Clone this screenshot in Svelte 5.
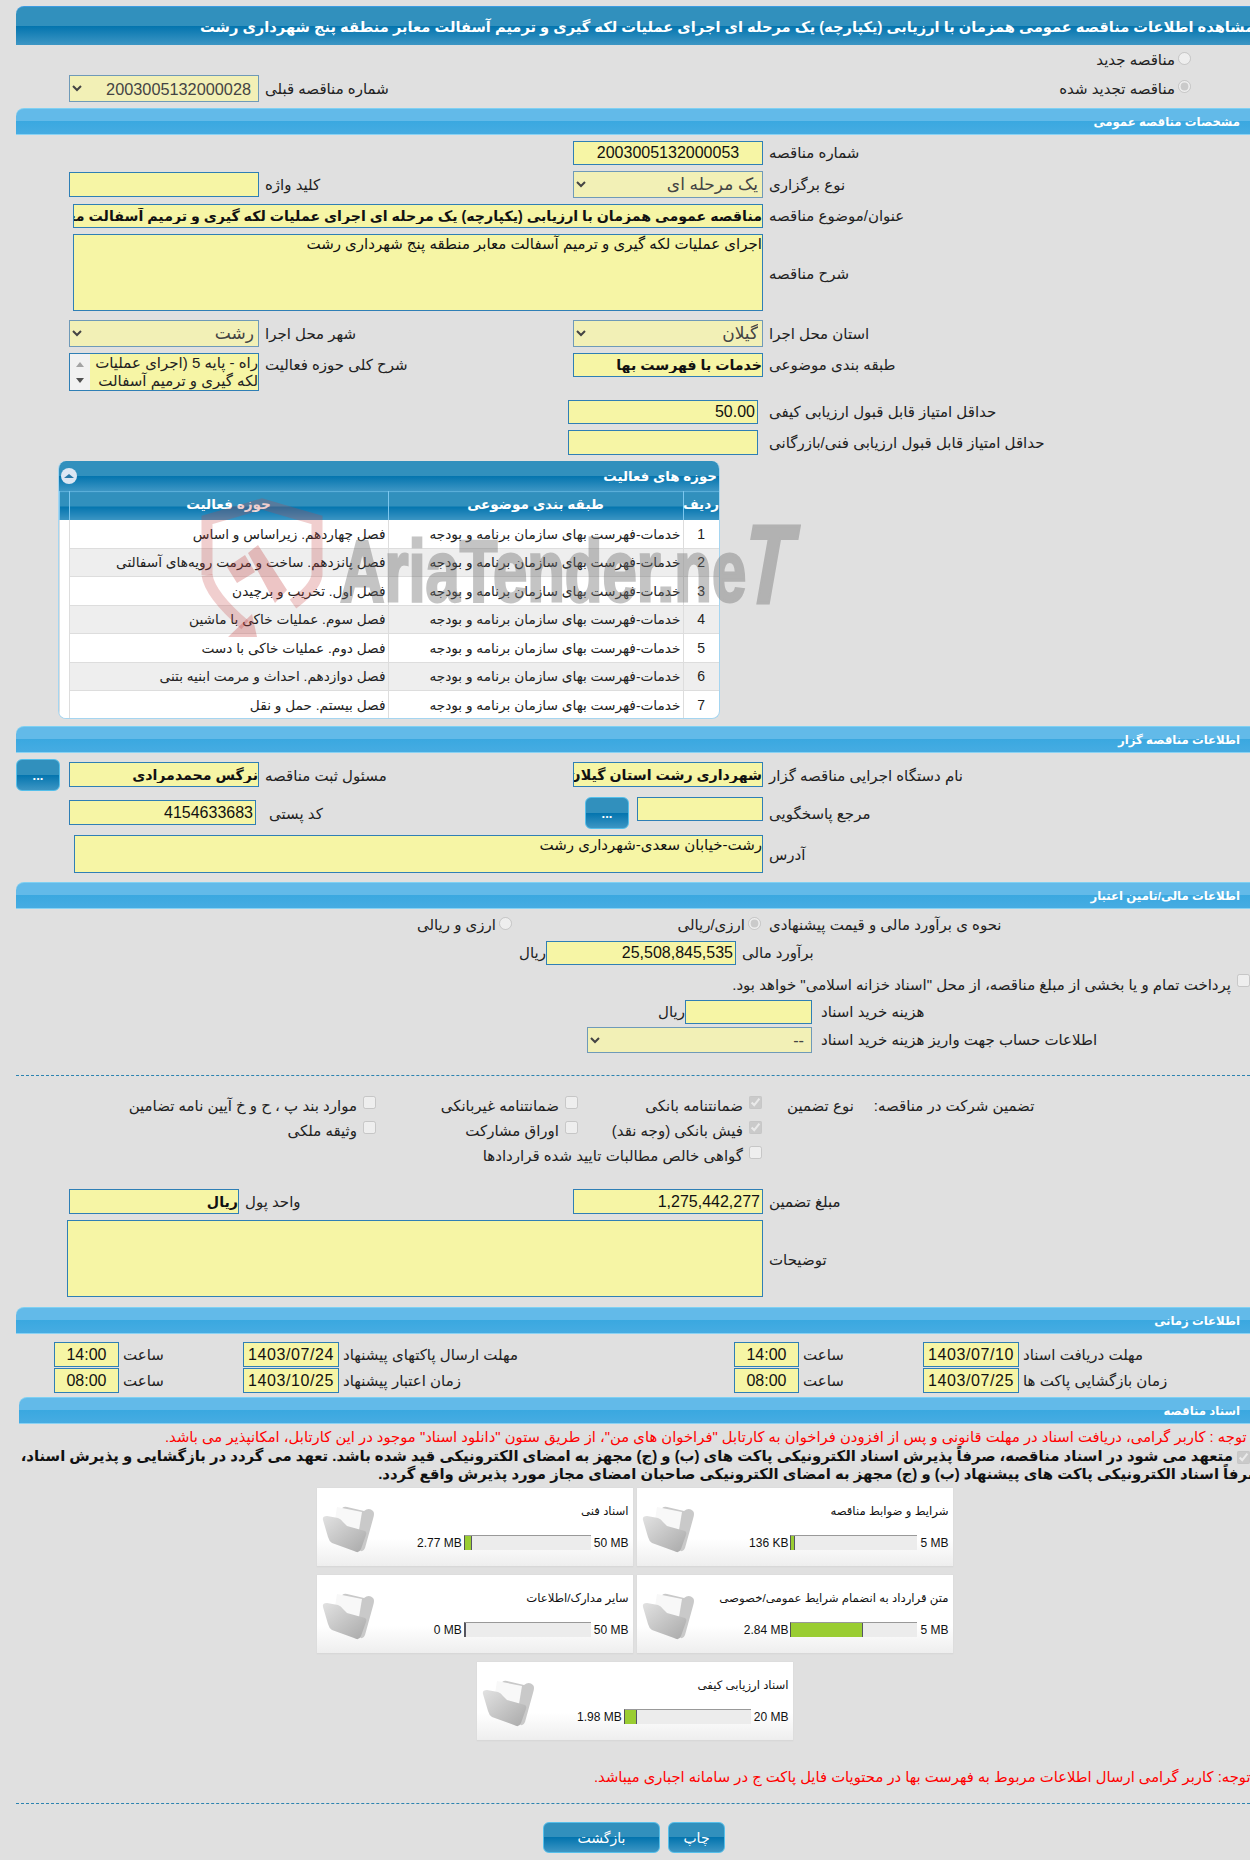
<script lang="ts">
  const TITLE =
    'مناقصه عمومی همزمان با ارزیابی (یکپارچه) یک مرحله ای اجرای عملیات لکه گیری و ترمیم آسفالت معابر منطقه پنج شهرداری رشت';
  const DESC = 'اجرای عملیات لکه گیری و ترمیم آسفالت معابر منطقه پنج شهرداری رشت';
  const PRICE_LIST = 'خدمات-فهرست بهای سازمان برنامه و بودجه';

  const activities = [
    'فصل چهاردهم. زیراساس و اساس',
    'فصل پانزدهم. ساخت و مرمت رویه‌های آسفالتی',
    'فصل اول. تخریب و برچیدن',
    'فصل سوم. عملیات خاکی با ماشین',
    'فصل دوم. عملیات خاکی با دست',
    'فصل دوازدهم. احداث و مرمت ابنیه بتنی',
    'فصل بیستم. حمل و نقل'
  ];

  const files = [
    { name: 'شرایط و ضوابط مناقصه', used: '136 KB', max: '5 MB', pct: 2.6 },
    { name: 'اسناد فنی', used: '2.77 MB', max: '50 MB', pct: 5.5 },
    { name: 'متن قرارداد به انضمام شرایط عمومی/خصوصی', used: '2.84 MB', max: '5 MB', pct: 56.8 },
    { name: 'سایر مدارک/اطلاعات', used: '0 MB', max: '50 MB', pct: 0 },
    { name: 'اسناد ارزیابی کیفی', used: '1.98 MB', max: '20 MB', pct: 9.9 }
  ];
</script>

{#snippet folder()}
  <svg class="folder" viewBox="0 0 54 50" aria-hidden="true">
    <defs>
      <linearGradient id="fold" x1="0" y1="0" x2="1" y2="1">
        <stop offset="0" stop-color="#e2e2e2" />
        <stop offset="1" stop-color="#a9a9a9" />
      </linearGradient>
    </defs>
    <path d="M20 7 Q21 2 26 3 L43 7 Q48 3 52 7 Q54 9 52 15 L44 44 Q42 49 38 46 Z" fill="#c9c9c9" />
    <path d="M16 3 L41 8 L37 32 L13 22 Z" fill="#f8f8f8" />
    <path d="M2 16 Q1 12 6 12 L17 14 Q20 15 22 18 L26 22 L44 27 Q46 28 45 31 L40 45 Q38 50 33 47 L11 39 Q8 37 7 33 Z" fill="url(#fold)" />
  </svg>
{/snippet}

<div class="page">
  <div class="title-bar"><span>مشاهده اطلاعات {TITLE}</span></div>

  <div class="row radio-top">
    <div></div><div></div><div></div>
    <label class="radio-label"><input type="radio" disabled />مناقصه جدید</label>
  </div>
  <div class="row radio-second">
    <select disabled dir="rtl"><option>2003005132000028</option></select>
    <span class="lbl">شماره مناقصه قبلی</span>
    <div></div>
    <label class="radio-label"><input type="radio" checked disabled />مناقصه تجدید شده</label>
  </div>

  <div class="bar first">مشخصات مناقصه عمومی</div>

  <div class="row r24 gap6">
    <div></div><div></div>
    <input class="field center" dir="ltr" readonly value="2003005132000053" />
    <span class="lbl">شماره مناقصه</span>
  </div>
  <div class="row r27 gap6">
    <input class="field slim" dir="rtl" readonly />
    <span class="lbl">کلید واژه</span>
    <select class="ar" disabled dir="rtl"><option>یک مرحله ای</option></select>
    <span class="lbl">نوع برگزاری</span>
  </div>
  <div class="row r24 gap6">
    <input class="field wide bold" dir="rtl" readonly value={TITLE} />
    <span class="lbl">عنوان/موضوع مناقصه</span>
  </div>
  <div class="row r77 gap6">
    <textarea class="field wide small" dir="rtl" readonly>{DESC}</textarea>
    <span class="lbl">شرح مناقصه</span>
  </div>
  <div class="row r27 gap9">
    <select class="ar" disabled dir="rtl"><option>رشت</option></select>
    <span class="lbl">شهر محل اجرا</span>
    <select class="ar" disabled dir="rtl"><option>گیلان</option></select>
    <span class="lbl">استان محل اجرا</span>
  </div>
  <div class="row r38 gap6">
    <div class="listbox">
      <div class="scroller"><i class="up"></i><i class="down"></i></div>
      <div class="list-text">راه - پایه 5 (اجرای عملیات لکه گیری و ترمیم آسفالت</div>
    </div>
    <span class="lbl top">شرح کلی حوزه فعالیت</span>
    <input class="field h24 bold" dir="rtl" readonly value="خدمات با فهرست بها" />
    <span class="lbl top">طبقه بندی موضوعی</span>
  </div>
  <div class="row r24 gap9">
    <div></div><div></div>
    <input class="field shift" dir="rtl" readonly value="50.00" />
    <span class="lbl">حداقل امتیاز قابل قبول ارزیابی کیفی</span>
  </div>
  <div class="row r25 gap6">
    <div></div><div></div>
    <input class="field shift" dir="rtl" readonly />
    <span class="lbl">حداقل امتیاز قابل قبول ارزیابی فنی/بازرگانی</span>
  </div>

  <div class="panel-wrap">
    <div class="panel">
      <div class="panel-head">
        <span class="collapse"><i></i></span>
        <span>حوزه های فعالیت</span>
      </div>
      <table dir="rtl">
        <colgroup>
          <col class="c-num" /><col class="c-sub" /><col class="c-act" /><col />
        </colgroup>
        <thead>
          <tr><th>ردیف</th><th>طبقه بندی موضوعی</th><th>حوزه فعالیت</th><th></th></tr>
        </thead>
        <tbody>
          {#each activities as activity, i}
            <tr>
              <td class="num">{i + 1}</td>
              <td>{PRICE_LIST}</td>
              <td>{activity}</td>
              <td></td>
            </tr>
          {/each}
        </tbody>
      </table>
    </div>

    <!-- watermark over the table -->
    <div class="mark">
      <svg class="shield" viewBox="0 0 150 150" aria-hidden="true">
        <path d="M17 85 L17 30 L72 14 L127 30 L127 85 Q125 98 103 114" class="band" />
        <path d="M17 85 Q20 105 55 135" class="band" />
        <path d="M38 147 L67 147 L62 124 Z M37 77 L55 65 L65 82 L47 93 Z M58 63 L68 55 L97 100 L85 113 Z" class="solid" />
      </svg>
      <div class="mark-text">AriaTender.ne<span>T</span></div>
    </div>
  </div>

  <div class="bar gap7">اطلاعات مناقصه گزار</div>

  <div class="row r32 gap6">
    <div class="with-btn-left">
      <button class="btn dots">...</button>
      <input class="field" dir="rtl" readonly value="نرگس محمدمرادی" />
    </div>
    <span class="lbl">مسئول ثبت مناقصه</span>
    <input class="field h25 mt3 bold" dir="rtl" readonly value="شهرداری رشت استان گیلان" />
    <span class="lbl">نام دستگاه اجرایی مناقصه گزار</span>
  </div>
  <div class="row r32 gap6">
    <input class="field h25 mt3 postal" dir="rtl" readonly value="4154633683" />
    <span class="lbl pad-postal">کد پستی</span>
    <div class="with-btn">
      <button class="btn dots">...</button>
      <input class="field h24" dir="rtl" readonly />
    </div>
    <span class="lbl">مرجع پاسخگویی</span>
  </div>
  <div class="row r38 gap6">
    <textarea class="field wide addr small" dir="rtl" readonly>رشت-خیابان سعدی-شهرداری رشت</textarea>
    <span class="lbl low">آدرس</span>
  </div>

  <div class="bar gap9">اطلاعات مالی/تامین اعتبار</div>

  <div class="fin-radios">
    <label class="radio-label"><input type="radio" disabled />ارزی و ریالی</label>
    <label class="radio-label"><input type="radio" checked disabled />ارزی/ریالی</label>
    <span class="lbl">نحوه ی برآورد مالی و قیمت پیشنهادی</span>
  </div>
  <div class="fin-budget">
    <span class="unit">ریال</span>
    <input class="field h24" dir="rtl" readonly value="25,508,845,535" />
    <span class="lbl">برآورد مالی</span>
  </div>
  <label class="treasury">
    <input type="checkbox" disabled />
    پرداخت تمام و یا بخشی از مبلغ مناقصه، از محل "اسناد خزانه اسلامی" خواهد بود.
  </label>
  <div class="fin-cost">
    <span class="unit">ریال</span>
    <input class="field h24" dir="rtl" readonly />
    <span class="lbl">هزینه خرید اسناد</span>
  </div>
  <div class="fin-account">
    <select disabled dir="rtl"><option>--</option></select>
    <span class="lbl">اطلاعات حساب جهت واریز هزینه خرید اسناد</span>
  </div>

  <div class="dashed first-dash"></div>

  <div class="guarantee">
    <label class="chk"><input type="checkbox" disabled />موارد بند پ ، ح و خ آیین نامه تضامین</label>
    <label class="chk"><input type="checkbox" disabled />ضمانتنامه غیربانکی</label>
    <label class="chk"><input type="checkbox" checked disabled />ضمانتنامه بانکی</label>
    <div class="g-labels"><span>نوع تضمین</span><span>تضمین شرکت در مناقصه:</span></div>

    <label class="chk"><input type="checkbox" disabled />وثیقه ملکی</label>
    <label class="chk"><input type="checkbox" disabled />اوراق مشارکت</label>
    <label class="chk"><input type="checkbox" checked disabled />فیش بانکی (وجه نقد)</label>
    <div></div>

    <div></div><div></div>
    <label class="chk"><input type="checkbox" disabled />گواهی خالص مطالبات تایید شده قراردادها</label>
    <div></div>
  </div>

  <div class="row r25 gap21">
    <input class="field unit-field" dir="rtl" readonly value="ریال" />
    <span class="lbl money-lbl">واحد پول</span>
    <input class="field" dir="rtl" readonly value="1,275,442,277" />
    <span class="lbl">مبلغ تضمین</span>
  </div>
  <div class="row r77 gap6">
    <textarea class="field notes-area" dir="rtl" readonly></textarea>
    <span class="lbl">توضیحات</span>
  </div>

  <div class="bar gap10">اطلاعات زمانی</div>

  <div class="times">
    <input class="field center" dir="rtl" readonly value="14:00" />
    <span class="lbl">ساعت</span>
    <input class="field center date" dir="rtl" readonly value="1403/07/24" />
    <span class="lbl">مهلت ارسال پاکتهای پیشنهاد</span>
    <input class="field center" dir="rtl" readonly value="14:00" />
    <span class="lbl">ساعت</span>
    <input class="field center date" dir="rtl" readonly value="1403/07/10" />
    <span class="lbl">مهلت دریافت اسناد</span>

    <input class="field center" dir="rtl" readonly value="08:00" />
    <span class="lbl">ساعت</span>
    <input class="field center date" dir="rtl" readonly value="1403/10/25" />
    <span class="lbl">زمان اعتبار پیشنهاد</span>
    <input class="field center" dir="rtl" readonly value="08:00" />
    <span class="lbl">ساعت</span>
    <input class="field center date" dir="rtl" readonly value="1403/07/25" />
    <span class="lbl">زمان بازگشایی پاکت ها</span>
  </div>

  <div class="bar docs-bar">اسناد مناقصه</div>

  <p class="red red-one"><span>توجه : کاربر گرامی، دریافت اسناد در مهلت قانونی و پس از افزودن فراخوان به کارتابل "فراخوان های من"، از طریق ستون "دانلود اسناد" موجود در این کارتابل، امکانپذیر می باشد.</span></p>

  <div class="pledge" dir="rtl">
    <input type="checkbox" checked disabled />
    متعهد می شود در اسناد مناقصه، صرفاً پذیرش اسناد الکترونیکی پاکت های (ب) و (ج) مجهز به امضای الکترونیکی قید شده باشد. تعهد می گردد در بازگشایی و پذیرش اسناد،<br />
    صرفاً اسناد الکترونیکی پاکت های پیشنهاد (ب) و (ج) مجهز به امضای الکترونیکی صاحبان امضای مجاز مورد پذیرش واقع گردد.
  </div>

  <div class="cards">
    {#each files as file}
      <div class="card">
        {@render folder()}
        <div class="card-body">
          <div class="card-name">{file.name}</div>
          <div class="meter-row">
            <span>{file.used}</span>
            <div class="meter"><div class="fill" style="width:{file.pct}%"></div></div>
            <span>{file.max}</span>
          </div>
        </div>
      </div>
    {/each}
  </div>

  <p class="red red-two"><span>توجه: کاربر گرامی ارسال اطلاعات مربوط به فهرست بها در محتویات فایل پاکت ج در سامانه اجباری میباشد.</span></p>

  <div class="dashed second-dash"></div>

  <div class="actions">
    <button class="btn back">بازگشت</button>
    <button class="btn print">چاپ</button>
  </div>
</div>

<style>
  :global(body) {
    margin: 0;
    background: #e0e0e0;
  }

  .page {
    width: 1250px;
    height: 1860px;
    overflow: hidden;
    background: #e0e0e0;
    padding-top: 6px;
    box-sizing: border-box;
    font-family: "Liberation Sans", "DejaVu Sans", sans-serif;
    font-size: 15px;
    color: #222;
  }

  .title-bar {
    margin-left: 16px;
    height: 39px;
    box-sizing: border-box;
    display: flex;
    align-items: center;
    padding-left: 184px;
    overflow: hidden;
    white-space: nowrap;
    direction: ltr;
    border-radius: 8px 0 0 0;
    border-top: 1px solid #3d9be0;
    color: #fff;
    font-weight: bold;
    font-size: 14.65px;
    background: linear-gradient(#3190bd 0, #3190bd 50%, #0374ae 50%, #3d96c4 100%);
  }

  .title-bar span {
    flex: none;
    direction: rtl;
  }

  .bar {
    margin-left: 16px;
    height: 27px;
    box-sizing: border-box;
    padding: 2px 10px 0 0;
    direction: rtl;
    color: #fff;
    font-weight: bold;
    font-size: 11.7px;
    line-height: 22px;
    border-radius: 8px 0 0 0;
    border-top: 1px solid #7fd0f2;
    border-bottom: 1px solid #8ad2f3;
    background: linear-gradient(#62bae9 0, #62bae9 48%, #3aa8e0 48%, #46ace2 100%);
  }

  .bar.first { margin-top: 6px; }
  .gap7 { margin-top: 7px; }
  .gap9 { margin-top: 9px; }
  .gap10 { margin-top: 10px; }
  .gap6 { margin-top: 6px; }
  .gap21 { margin-top: 21px; }

  .docs-bar {
    margin-left: 19px;
    margin-top: 4px;
  }

  .row {
    display: grid;
    grid-template-columns: 190px 314px 190px 1fr;
    margin-left: 69px;
    align-items: center;
  }

  .r24 { height: 24px; }
  .r25 { height: 25px; }
  .r27 { height: 27px; }
  .r32 { height: 32px; align-items: start; }
  .r38 { height: 38px; align-items: start; }
  .r77 { height: 77px; }

  .radio-top { height: 30px; }
  .radio-second { height: 27px; }

  .lbl {
    direction: rtl;
    text-align: left;
    unicode-bidi: plaintext;
    padding-left: 6px;
    white-space: nowrap;
  }

  .r32 .lbl, .r38 .lbl { padding-top: 8px; }
  .r38 .lbl.top { padding-top: 3px; }
  .r38 .lbl.low { padding-top: 11px; }
  .r77 .lbl { padding-top: 3px; }

  .field {
    box-sizing: border-box;
    width: 100%;
    height: 100%;
    margin: 0;
    padding: 0 2px;
    border: 1px solid #2f7fb5;
    background: #f6f5a5;
    color: #111;
    font: 16px "Liberation Sans", "DejaVu Sans", sans-serif;
    border-radius: 0;
    outline: none;
  }

  .center { text-align: center; }
  .date { letter-spacing: 0.6px; }
  .bold { font-weight: bold; font-size: 14.2px; padding: 0; }
  .small { font-size: 15px; padding: 0; }
  .slim { height: 25px; }
  .h24 { height: 24px; }
  .h25 { height: 25px; }
  .mt3 { margin-top: 3px; }
  .shift { margin-left: -5px; }

  .wide {
    grid-column: 1 / 4;
    width: calc(100% - 4px);
    margin-left: 4px;
  }

  textarea.field { resize: none; overflow: hidden; }

  .addr { margin-left: 5px; width: calc(100% - 5px); }
  .postal { width: 187px; }
  .pad-postal { padding-left: 10px; }

  select {
    box-sizing: border-box;
    width: 100%;
    height: 100%;
    margin: 0;
    padding-right: 3px;
    border: 1px solid #6f9ab8;
    border-radius: 0;
    background-color: #f2f0b6;
    color: #444;
    opacity: 1;
    font: 16.3px "Liberation Sans", "DejaVu Sans", sans-serif;
  }

  select.ar { font-size: 17px; padding-right: 0; }

  .radio-label {
    display: flex;
    align-items: center;
    direction: rtl;
    padding-right: 59px;
    white-space: nowrap;
  }

  .radio-label input {
    margin: 0 0 4px 3px;
  }

  .listbox {
    display: flex;
    box-sizing: border-box;
    height: 38px;
    border: 1px solid #2f7fb5;
    background: #f6f5a5;
    overflow: hidden;
  }

  .scroller {
    flex: none;
    width: 20px;
    background: #f1f1f1;
    display: flex;
    flex-direction: column;
    align-items: center;
    justify-content: center;
    gap: 11px;
  }

  .scroller i {
    width: 0;
    height: 0;
    border-left: 4px solid transparent;
    border-right: 4px solid transparent;
  }

  .scroller .up { border-bottom: 5px solid #a3a3a3; }
  .scroller .down { border-top: 5px solid #505050; }

  .list-text {
    direction: rtl;
    font-size: 15px;
    line-height: 18px;
    white-space: normal;
  }

  .panel-wrap {
    position: relative;
    margin: 6px 0 0 58px;
    width: 662px;
  }

  .panel {
    height: 258px;
    box-sizing: border-box;
    background: #fff;
    overflow: hidden;
    border-radius: 8px;
    border: 1px solid #a5d5f0;
    border-top: 0;
  }

  .panel-head {
    height: 30px;
    display: flex;
    align-items: center;
    justify-content: space-between;
    padding: 0 2px 0 2px;
    color: #fff;
    font-weight: bold;
    font-size: 13.4px;
    direction: ltr;
    background: linear-gradient(#3190bd 0, #3190bd 50%, #0374ae 50%, #3d96c4 100%);
  }

  .collapse {
    width: 16px;
    height: 16px;
    border-radius: 50%;
    background: #dde7f3;
    display: flex;
    align-items: center;
    justify-content: center;
  }

  .collapse i {
    width: 0;
    height: 0;
    border-left: 5px solid transparent;
    border-right: 5px solid transparent;
    border-bottom: 4px solid #2b79a9;
  }

  table {
    width: 100%;
    table-layout: fixed;
    border-collapse: collapse;
    font-size: 13.7px;
  }

  .c-num { width: 36px; }
  .c-sub { width: 295px; }
  .c-act { width: 319px; }

  th {
    height: 28px;
    padding: 0 0 4px;
    box-sizing: border-box;
    color: #fff;
    font-size: 13.6px;
    border-left: 1px solid #7cc6ee;
    border-top: 1px solid #5aaed8;
    background: linear-gradient(#3190bd 0, #3190bd 50%, #0374ae 50%, #3d96c4 100%);
  }

  td {
    height: 28.5px;
    padding: 0 2px;
    box-sizing: border-box;
    border-bottom: 1px solid #ddd;
    border-left: 1px solid #ddd;
    white-space: nowrap;
    text-align: right;
    color: #222;
  }

  td.num {
    text-align: center;
    font-size: 14px;
  }

  tbody tr:nth-child(even) td { background: #eee; }
  tbody tr td:last-child { background: #fff; border-bottom: 0; }

  .mark {
    position: absolute;
    left: 0;
    top: 0;
    pointer-events: none;
  }

  .shield {
    position: absolute;
    left: 132px;
    top: 29px;
    width: 150px;
    height: 150px;
  }

  .band {
    fill: none;
    stroke: rgba(196, 64, 64, 0.26);
    stroke-width: 11;
  }

  .solid { fill: rgba(196, 64, 64, 0.3); }

  .mark-text {
    position: absolute;
    left: 282px;
    top: 46px;
    white-space: nowrap;
    font: bold 88px/1 "Liberation Sans", sans-serif;
    color: #6e6e6e;
    -webkit-text-stroke: 3px #6e6e6e;
    opacity: 0.4;
    transform: scaleX(0.7);
    transform-origin: left top;
  }

  .mark-text span {
    display: inline-block;
    font-size: 112px;
    transform: translateY(2px) skewX(-14deg);
  }

  .btn {
    box-sizing: border-box;
    padding: 0;
    color: #fff;
    font-family: "Liberation Sans", "DejaVu Sans", sans-serif;
    border: 1px solid #55bfea;
    border-radius: 6px;
    background: linear-gradient(#3190bd 0, #3190bd 50%, #0374ae 50%, #3d96c4 100%);
  }

  .dots {
    flex: none;
    width: 44px;
    height: 32px;
    font-weight: bold;
    font-size: 13px;
  }

  .with-btn-left {
    display: flex;
    gap: 9px;
    margin-left: -53px;
    width: 243px;
    height: 32px;
    align-items: flex-start;
  }

  .with-btn-left .field {
    height: 25px;
    margin-top: 3px;
    font-weight: bold;
    font-size: 14.2px;
    padding: 0;
  }

  .with-btn {
    display: flex;
    gap: 8px;
    margin-left: 12px;
  }

  .fin-radios {
    display: grid;
    grid-template-columns: 514px 249px 1fr;
    align-items: center;
    height: 32px;
  }

  .fin-radios .radio-label { padding-right: 2px; }

  .fin-budget {
    display: flex;
    align-items: center;
    height: 24px;
    padding-left: 516px;
  }

  .fin-budget .unit { width: 30px; padding-left: 4px; }
  .fin-budget .field { width: 190px; flex: none; }

  .unit {
    flex: none;
    direction: rtl;
    box-sizing: border-box;
  }

  .treasury {
    display: flex;
    align-items: center;
    direction: rtl;
    height: 35px;
    padding-top: 4px;
    box-sizing: border-box;
    white-space: nowrap;
  }

  .treasury input { margin: 0 0 8px 6px; flex: none; }

  .fin-cost {
    display: flex;
    align-items: center;
    height: 24px;
    padding-left: 655px;
  }

  .fin-cost .unit { width: 30px; }
  .fin-cost .field { width: 127px; flex: none; }
  .fin-cost .lbl { padding-left: 9px; }

  .fin-account {
    display: flex;
    align-items: center;
    height: 26px;
    margin-top: 3px;
    padding-left: 587px;
  }

  .fin-account select { width: 225px; flex: none; }
  .fin-account .lbl { padding-left: 9px; }

  .dashed {
    margin-left: 16px;
    border-top: 1px dashed #2c83b0;
  }

  .first-dash { margin-top: 22px; }

  .guarantee {
    margin-top: 17px;
    display: grid;
    grid-template-columns: 376px 202px 184px 1fr;
    grid-auto-rows: 25px;
    align-items: center;
  }

  .chk {
    display: flex;
    align-items: center;
    direction: rtl;
    white-space: nowrap;
    justify-content: flex-start;
  }

  .chk input {
    margin: 0 0 6px 6px;
    flex: none;
  }

  .g-labels {
    display: flex;
    gap: 20px;
    padding-left: 25px;
    white-space: nowrap;
    direction: ltr;
  }

  .g-labels span { direction: rtl; }

  .unit-field {
    width: 170px;
    font-size: 14.2px;
    font-weight: bold;
    padding: 0;
  }

  .money-lbl { margin-left: -20px; }

  .notes-area {
    grid-column: 1 / 4;
    margin-left: -2px;
    width: calc(100% + 2px);
  }

  .times {
    margin: 8px 0 0 54px;
    display: grid;
    grid-template-columns: 65px 124px 96px 395px 65px 124px 96px 1fr;
    grid-auto-rows: 25px;
    row-gap: 1px;
    align-items: center;
  }

  .times .lbl { padding-left: 4px; }

  .red {
    margin: 0;
    color: #f00;
    font-size: 14.8px;
    display: flex;
    white-space: nowrap;
    height: 20px;
    line-height: 20px;
  }

  .red span { flex: none; direction: rtl; }

  .red-one { margin-top: 3px; padding-left: 165px; }
  .red-two { margin-top: 26px; padding-left: 594px; }

  .pledge {
    margin: 0 -12px 1px 0;
    white-space: nowrap;
    text-align: right;
    font-weight: bold;
    font-size: 14.85px;
    line-height: 18px;
    color: #111;
    height: 40px;
    box-sizing: border-box;
  }

  .pledge input { margin: 0 12px 0 0; vertical-align: middle; }

  .cards {
    display: flex;
    flex-wrap: wrap;
    justify-content: center;
    gap: 8px 4px;
    width: 637px;
    margin-left: 316px;
    direction: rtl;
  }

  .card {
    display: flex;
    direction: ltr;
    width: 316px;
    height: 79px;
    box-sizing: border-box;
    background: linear-gradient(#fff 0, #fff 65%, #eee 100%);
    border-bottom: 1px solid #d8d8d8;
    box-shadow: 0 0 1px #ccc;
  }

  .folder {
    flex: none;
    width: 54px;
    height: 50px;
    margin: 16px 0 0 4px;
  }

  .card-body {
    flex: 1;
    min-width: 0;
  }

  .card-name {
    direction: rtl;
    margin-top: 15px;
    padding-right: 4px;
    font-size: 11.7px;
    line-height: 16px;
    white-space: nowrap;
    color: #111;
  }

  .meter-row {
    display: flex;
    justify-content: flex-end;
    align-items: center;
    margin-top: 16px;
    padding-right: 4px;
    font-size: 12px;
    color: #111;
    white-space: nowrap;
  }

  .meter {
    flex: none;
    width: 127px;
    height: 15px;
    margin: 0 3px 0 2px;
    box-sizing: border-box;
    background: #ececec;
    border-top: 1px solid #999;
    border-left: 1px solid #555;
  }

  .fill {
    height: 100%;
    background: #9acd32;
    border-right: 1px solid #556;
    box-sizing: border-box;
  }

  .second-dash { margin-top: 16px; }

  .actions {
    display: flex;
    gap: 8px;
    margin: 18px 0 0 543px;
  }

  .back {
    width: 117px;
    height: 31px;
    font-size: 14px;
  }

  .print {
    width: 57px;
    height: 31px;
    font-size: 14px;
  }
</style>
